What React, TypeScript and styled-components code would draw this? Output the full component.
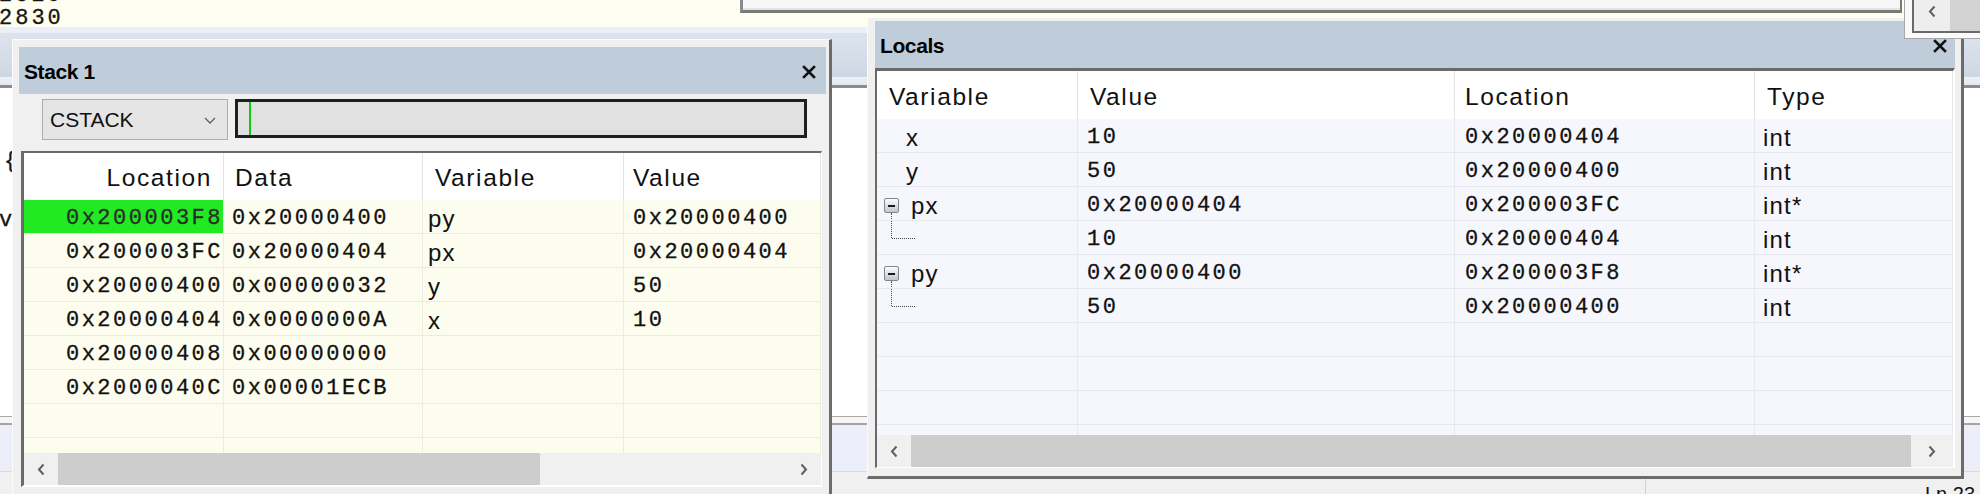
import React from "react";
import styled, { createGlobalStyle, css } from "styled-components";

const MONO = `"Liberation Mono", "DejaVu Sans Mono", monospace`;
const SANS = `"Liberation Sans", Arial, sans-serif`;

const GlobalStyle = createGlobalStyle`
  html, body { margin: 0; padding: 0; background: #ffffff; }
  body { font-family: ${SANS}; color: #111; }
  * { box-sizing: border-box; }
`;

/* ---------- desktop backdrop ---------- */

const Screen = styled.div`
  position: relative;
  width: 1980px;
  height: 494px;
  overflow: hidden;
  background: #ffffff;
`;

const Backdrop = styled.div`
  display: flex;
  flex-direction: column;
  height: 100%;
`;

const monoText = css`
  font-family: ${MONO};
  font-size: 22px;
  letter-spacing: 2.5px;
  -webkit-text-stroke: 0.3px currentColor;
`;

const Editor = styled.div`
  height: 27px;
  flex: none;
  overflow: hidden;
  background: #fefef1;
  ${monoText};
  letter-spacing: 3px;
  line-height: 23px;
  color: #151515;
`;

const EditorLines = styled.div`
  margin-top: -16px;
  margin-left: -1px;
`;

const TabBand = styled.div`
  height: 61px;
  flex: none;
  background: linear-gradient(
    to bottom,
    #eceff7 0px,
    #eceff7 6px,
    #dde4ee 6px,
    #cdd7e4 50px,
    #eef1f6 50px,
    #e3e8f0 58px,
    #8c8c8c 58px,
    #8c8c8c 61px
  );
`;

const WorkArea = styled.div`
  height: 328px;
  flex: none;
  background: #ffffff;
  ${monoText};
  letter-spacing: 3px;
  line-height: 23px;
  color: #151515;
`;

const CodeLine = styled.div<{ $gap: number; $indent: number }>`
  height: 23px;
  margin-top: ${(p) => p.$gap}px;
  margin-left: ${(p) => p.$indent}px;
  white-space: pre;
`;

const BottomBand = styled.div`
  height: 56px;
  flex: none;
  background: linear-gradient(
    to bottom,
    #a9a9a9 0px,
    #a9a9a9 1px,
    #f6f6f6 1px,
    #f6f6f6 7px,
    #a4a4a4 7px,
    #a4a4a4 9px,
    #eceef9 9px,
    #eceef9 55px,
    #dadada 55px
  );
`;

const StatusBar = styled.div`
  height: 22px;
  flex: none;
  display: flex;
  background: #f0f0f0;
  font-family: ${SANS};
  font-size: 20px;
  line-height: 20px;
  color: #111;
`;

const StatusSection = styled.div<{ $width: number }>`
  width: ${(p) => p.$width}px;
  flex: none;
  border-right: 1px solid #d2d2d2;
`;

const StatusText = styled.div`
  padding: 12px 0 0 279px;
  white-space: nowrap;
`;

/* ---------- background windows ---------- */

const TopBox = styled.div`
  position: absolute;
  left: 740px;
  top: 0;
  width: 1162px;
  height: 13px;
  background: #f6f6f6;
  border-left: 3px solid #8a8a8a;
  border-right: 2px solid #7a7a7a;
  border-bottom: 3px solid #7a7a7a;
  box-shadow: inset 0 -2px 0 #e4e4e4;
`;

const ScrollPopup = styled.div`
  position: absolute;
  left: 1904px;
  top: 0;
  width: 80px;
  height: 39px;
  padding: 0 0 5px 7px;
  background: #fafafa;
  border-left: 1px solid #a8a8a8;
  border-bottom: 1px solid #a8a8a8;
`;

const PopupBar = styled.div`
  display: flex;
  height: 100%;
  border-left: 2px solid #6a6a6a;
  border-bottom: 2px solid #6a6a6a;
`;

const PopupButton = styled.div`
  width: 36px;
  flex: none;
  display: flex;
  align-items: center;
  justify-content: center;
  padding-bottom: 8px;
  background: #eeeeee;
`;

const PopupThumb = styled.div`
  flex: 1;
  background: #d2d2d2;
`;

/* ---------- tool windows ---------- */

const ToolWindow = styled.section<{ $left: number; $top: number; $width: number; $height: number }>`
  position: absolute;
  left: ${(p) => p.$left}px;
  top: ${(p) => p.$top}px;
  width: ${(p) => p.$width}px;
  height: ${(p) => p.$height}px;
  display: flex;
  flex-direction: column;
  background: #f0f0f0;
  border-top: 1px solid #fbfbfb;
  border-left: 1px solid #fbfbfb;
  border-right: 3px solid #6c6c6c;
  border-bottom: 3px solid #6c6c6c;
`;

const StackWindowBody = styled(ToolWindow)`
  padding: 7px 3px 0 6px;
`;

const LocalsWindowBody = styled(ToolWindow)`
  padding: 3px 6px 8px 7px;
`;

const TitleBar = styled.header<{ $closeGap: number }>`
  height: 47px;
  flex: none;
  display: flex;
  align-items: center;
  justify-content: space-between;
  padding: 2px ${(p) => p.$closeGap}px 0 5px;
  background: #bfcddb;
`;

const TitleText = styled.span`
  font-family: ${SANS};
  font-weight: 700;
  font-size: 21px;
  letter-spacing: -0.4px;
  color: #000;
`;

const CloseIcon = () => (
  <svg width="14" height="14" viewBox="0 0 14 14" aria-hidden>
    <path d="M2 2 L12 12 M12 2 L2 12" stroke="#111" strokeWidth="2.6" strokeLinecap="square" fill="none" />
  </svg>
);

const Toolbar = styled.div`
  height: 41px;
  flex: none;
  margin-top: 5px;
  padding-left: 23px;
  display: flex;
  gap: 7px;
`;

const Combo = styled.div`
  width: 186px;
  height: 41px;
  display: flex;
  align-items: center;
  justify-content: space-between;
  padding: 1px 11px 0 7px;
  background: #e5e5e5;
  border: 1px solid #adadad;
  font-family: ${SANS};
  font-size: 21px;
  color: #111;
`;

const Gauge = styled.div`
  width: 572px;
  height: 39px;
  display: flex;
  background: #e1e1e1;
  border: 3px solid #1f1f1f;
`;

const GaugeFill = styled.div`
  width: 2px;
  margin-left: 11px;
  background: #16c916;
`;

/* ---------- grids ---------- */

const TableFrame = styled.div<{ $variant: "stack" | "locals" }>`
  display: flex;
  flex-direction: column;
  overflow: hidden;
  border-style: solid;
  border-color: #6a6a6a #ffffff #ffffff #6a6a6a;
  ${(p) =>
    p.$variant === "stack"
      ? css`
          border-width: 2px 1px 2px 3px;
          height: 336px;
          flex: none;
          margin: 11px 4px 0 2px;
        `
      : css`
          border-width: 3px 2px 1px 2px;
          flex: 1;
        `}
`;

const HeaderRow = styled.div<{ $cols: string; $h: number }>`
  display: grid;
  grid-template-columns: ${(p) => p.$cols};
  height: ${(p) => p.$h}px;
  flex: none;
  background: #ffffff;
`;

type Align = "left" | "right";

const HeaderCell = styled.div<{ $align: Align; $padL: number; $padR: number }>`
  display: flex;
  align-items: center;
  justify-content: ${(p) => (p.$align === "right" ? "flex-end" : "flex-start")};
  padding: 3px ${(p) => p.$padR}px 0 ${(p) => p.$padL}px;
  border-right: 1px solid #e4e4e4;
  font-family: ${SANS};
  font-size: 24.5px;
  letter-spacing: 1.6px;
  color: #111;
  white-space: nowrap;
  overflow: hidden;
`;

const RowsViewport = styled.div<{ $bg: string }>`
  flex: 1;
  overflow: hidden;
  background: ${(p) => p.$bg};
`;

const Row = styled.div<{ $cols: string; $sep: string }>`
  display: grid;
  grid-template-columns: ${(p) => p.$cols};
  height: 34px;
  border-bottom: 1px solid ${(p) => p.$sep};
`;

const Cell = styled.div<{
  $align?: Align;
  $padL?: number;
  $padR?: number;
  $mono?: boolean;
  $active?: boolean;
  $line: string;
}>`
  display: flex;
  align-items: center;
  justify-content: ${(p) => (p.$align === "right" ? "flex-end" : "flex-start")};
  padding: 4px ${(p) => p.$padR ?? 0}px 0 ${(p) => p.$padL ?? 0}px;
  border-right: 1px solid ${(p) => p.$line};
  white-space: nowrap;
  overflow: hidden;
  color: ${(p) => (p.$active ? "#2a2a2a" : "#111")};
  background: ${(p) => (p.$active ? "#22ea22" : "transparent")};
  ${(p) =>
    p.$mono
      ? monoText
      : css`
          font-family: ${SANS};
          font-size: 24px;
          letter-spacing: 1.2px;
        `}
`;

const Expander = styled.span`
  position: relative;
  width: 15px;
  height: 15px;
  flex: none;
  margin-right: 12px;
  display: flex;
  align-items: center;
  justify-content: center;
  border: 1px solid #7d8793;
  border-radius: 2px;
  background: linear-gradient(#fdfdfd, #c6c6c6);
  &::before {
    content: "";
    width: 7px;
    height: 2px;
    background: #1a1a1a;
  }
  &::after {
    content: "";
    position: absolute;
    left: 6px;
    top: 14px;
    height: 6px;
    border-left: 1px dotted #555;
  }
`;

const HScroll = styled.div`
  height: 32px;
  flex: none;
  display: flex;
  background: #f0f0f0;
`;

const ScrollButton = styled.div<{ $w: number }>`
  width: ${(p) => p.$w}px;
  flex: none;
  display: flex;
  align-items: center;
  justify-content: center;
`;

const ScrollTrack = styled.div`
  flex: 1;
  display: flex;
`;

const ScrollThumb = styled.div<{ $w: number }>`
  width: ${(p) => p.$w}px;
  flex: none;
  background: #cdcdcd;
`;

const Chevron = ({ dir }: { dir: "left" | "right" }) => (
  <svg width="8" height="13" viewBox="0 0 8 13" aria-hidden>
    <path
      d={dir === "left" ? "M6.5 1.5 L2 6.5 L6.5 11.5" : "M1.5 1.5 L6 6.5 L1.5 11.5"}
      stroke="#5f5f5f"
      strokeWidth="2"
      fill="none"
    />
  </svg>
);

const ComboArrow = () => (
  <svg width="12" height="7" viewBox="0 0 12 7" aria-hidden>
    <path d="M1 1 L6 6 L11 1" stroke="#606060" strokeWidth="1.3" fill="none" />
  </svg>
);

const TreeElbow = () => (
  <svg width="40" height="33" viewBox="0 0 40 33" aria-hidden style={{ marginTop: -4 }}>
    <path d="M14.5 0 V17.5 H38" stroke="#4a4a4a" strokeWidth="1" strokeDasharray="1 1" fill="none" />
  </svg>
);

/* ---------- data ---------- */

type StackRow = { loc: string; data: string; variable: string; value: string; active?: boolean };

const stackRows: StackRow[] = [
  { loc: "0x200003F8", data: "0x20000400", variable: "py", value: "0x20000400", active: true },
  { loc: "0x200003FC", data: "0x20000404", variable: "px", value: "0x20000404" },
  { loc: "0x20000400", data: "0x00000032", variable: "y", value: "50" },
  { loc: "0x20000404", data: "0x0000000A", variable: "x", value: "10" },
  { loc: "0x20000408", data: "0x00000000", variable: "", value: "" },
  { loc: "0x2000040C", data: "0x00001ECB", variable: "", value: "" },
  { loc: "", data: "", variable: "", value: "" },
  { loc: "", data: "", variable: "", value: "" },
];

type LocalRow = {
  kind: "leaf" | "parent" | "child" | "empty";
  name?: string;
  value?: string;
  location?: string;
  type?: string;
};

const localRows: LocalRow[] = [
  { kind: "leaf", name: "x", value: "10", location: "0x20000404", type: "int" },
  { kind: "leaf", name: "y", value: "50", location: "0x20000400", type: "int" },
  { kind: "parent", name: "px", value: "0x20000404", location: "0x200003FC", type: "int*" },
  { kind: "child", value: "10", location: "0x20000404", type: "int" },
  { kind: "parent", name: "py", value: "0x20000400", location: "0x200003F8", type: "int*" },
  { kind: "child", value: "50", location: "0x20000400", type: "int" },
  { kind: "empty" },
  { kind: "empty" },
  { kind: "empty" },
  { kind: "empty" },
];

const STACK_COLS = "200px 199px 201px 1fr";
const LOCAL_COLS = "201px 377px 300px 1fr";
const STACK_BG = "#fdfdef";
const STACK_SEP = "#ebebdf";
const STACK_LINE = "#ececdf";
const LOCAL_BG = "#f6f7fc";
const LOCAL_SEP = "#e6e8ef";
const LOCAL_LINE = "#e8e9ef";

/* ---------- panels ---------- */

const StackPanel = () => (
  <StackWindowBody $left={12} $top={39} $width={820} $height={480}>
    <TitleBar $closeGap={10}>
      <TitleText>Stack 1</TitleText>
      <CloseIcon />
    </TitleBar>
    <Toolbar>
      <Combo>
        <span>CSTACK</span>
        <ComboArrow />
      </Combo>
      <Gauge>
        <GaugeFill />
      </Gauge>
    </Toolbar>
    <TableFrame $variant="stack">
      <HeaderRow $cols={STACK_COLS} $h={47}>
        <HeaderCell $align="right" $padL={0} $padR={11}>Location</HeaderCell>
        <HeaderCell $align="left" $padL={11} $padR={0}>Data</HeaderCell>
        <HeaderCell $align="left" $padL={12} $padR={0}>Variable</HeaderCell>
        <HeaderCell $align="left" $padL={9} $padR={0}>Value</HeaderCell>
      </HeaderRow>
      <RowsViewport $bg={STACK_BG}>
        {stackRows.map((r, i) => (
          <Row key={i} $cols={STACK_COLS} $sep={STACK_SEP}>
            <Cell $mono $align="right" $padR={0} $active={r.active} $line={STACK_LINE}>{r.loc}</Cell>
            <Cell $mono $padL={8} $line={STACK_LINE}>{r.data}</Cell>
            <Cell $padL={5} $line={STACK_LINE}>{r.variable}</Cell>
            <Cell $mono $padL={9} $line={STACK_LINE}>{r.value}</Cell>
          </Row>
        ))}
      </RowsViewport>
      <HScroll>
        <ScrollButton $w={34}><Chevron dir="left" /></ScrollButton>
        <ScrollTrack><ScrollThumb $w={482} /></ScrollTrack>
        <ScrollButton $w={34}><Chevron dir="right" /></ScrollButton>
      </HScroll>
    </TableFrame>
  </StackWindowBody>
);

const VariableCell = ({ row }: { row: LocalRow }) => {
  if (row.kind === "parent")
    return (
      <Cell $padL={7} $line={LOCAL_LINE}>
        <Expander />
        {row.name}
      </Cell>
    );
  if (row.kind === "child")
    return (
      <Cell $padL={0} $line={LOCAL_LINE}>
        <TreeElbow />
      </Cell>
    );
  return <Cell $padL={29} $line={LOCAL_LINE}>{row.name ?? ""}</Cell>;
};

const LocalsPanel = () => (
  <LocalsWindowBody $left={867} $top={17} $width={1097} $height={462}>
    <TitleBar $closeGap={8}>
      <TitleText>Locals</TitleText>
      <CloseIcon />
    </TitleBar>
    <TableFrame $variant="locals">
      <HeaderRow $cols={LOCAL_COLS} $h={48}>
        <HeaderCell $align="left" $padL={12} $padR={0}>Variable</HeaderCell>
        <HeaderCell $align="left" $padL={12} $padR={0}>Value</HeaderCell>
        <HeaderCell $align="left" $padL={10} $padR={0}>Location</HeaderCell>
        <HeaderCell $align="left" $padL={12} $padR={0}>Type</HeaderCell>
      </HeaderRow>
      <RowsViewport $bg={LOCAL_BG}>
        {localRows.map((r, i) => (
          <Row key={i} $cols={LOCAL_COLS} $sep={LOCAL_SEP}>
            <VariableCell row={r} />
            <Cell $mono $padL={9} $line={LOCAL_LINE}>{r.value ?? ""}</Cell>
            <Cell $mono $padL={10} $line={LOCAL_LINE}>{r.location ?? ""}</Cell>
            <Cell $padL={8} $line={LOCAL_LINE}>{r.type ?? ""}</Cell>
          </Row>
        ))}
      </RowsViewport>
      <HScroll>
        <ScrollButton $w={34}><Chevron dir="left" /></ScrollButton>
        <ScrollTrack><ScrollThumb $w={1000} /></ScrollTrack>
        <ScrollButton $w={42}><Chevron dir="right" /></ScrollButton>
      </HScroll>
    </TableFrame>
  </LocalsWindowBody>
);

export default function App() {
  return (
    <>
      <GlobalStyle />
      <Screen>
        <Backdrop>
          <Editor>
            <EditorLines>
              <div>2829</div>
              <div>2830</div>
            </EditorLines>
          </Editor>
          <TabBand />
          <WorkArea>
            <CodeLine $gap={62} $indent={4}>{"{"}</CodeLine>
            <CodeLine $gap={36} $indent={-1}>v</CodeLine>
          </WorkArea>
          <BottomBand />
          <StatusBar>
            <StatusSection $width={1646} />
            <StatusText>Ln 23</StatusText>
          </StatusBar>
        </Backdrop>
        <TopBox />
        <StackPanel />
        <LocalsPanel />
        <ScrollPopup>
          <PopupBar>
            <PopupButton><Chevron dir="left" /></PopupButton>
            <PopupThumb />
          </PopupBar>
        </ScrollPopup>
      </Screen>
    </>
  );
}
